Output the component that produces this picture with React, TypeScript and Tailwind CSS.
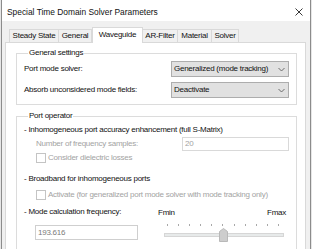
import React from "react";

const Chevron = () => (
  <svg width="7" height="5" viewBox="0 0 7 5" className="shrink-0">
    <polyline points="0.5,1 3.5,4 6.5,1" fill="none" stroke="#606060" strokeWidth="0.9" />
  </svg>
);

const Select = ({ value }: { value: string }) => (
  <div className="w-[118px] h-[16px] bg-[#e1e1e1] border border-[#adadad] flex items-center justify-between pl-[2px] pr-[3px]">
    <span className="leading-[10px]">{value}</span>
    <Chevron />
  </div>
);

const Checkbox = () => (
  <div className="w-[10px] h-[10px] border border-[#c4c4c4] bg-white shrink-0" />
);

const tabs = [
  { name: "Steady State", w: "w-[50px]" },
  { name: "General", w: "w-[34px]" },
  { name: "Waveguide", w: "w-[51px]", active: true },
  { name: "AR-Filter", w: "w-[36px]" },
  { name: "Material", w: "w-[35px]" },
  { name: "Solver", w: "w-[28px]" },
];

const ticks = [0, 1, 2, 3, 4, 5, 6, 7, 8, 9, 10];

export default function App() {
  return (
    <div className="w-[312px] h-[249px] overflow-hidden flex bg-[#e6e6e6] [font-family:'Liberation_Sans',Arial,sans-serif] text-[8px] tracking-[-0.25px] text-[#111]">
      <div className="ml-[1px] w-[310px] shrink-0 border-l border-r border-[#8c8c8c] bg-[#f0f0f0] flex flex-col">
        {/* Title bar */}
        <div className="h-[21px] bg-white flex items-center justify-between pl-[5px] pr-[7px] shrink-0">
          <span className="text-[8.4px] tracking-normal leading-[10px] mt-[3px]">Special Time Domain Solver Parameters</span>
          <svg width="8" height="8" viewBox="0 0 8 8" className="mt-[3px]">
            <line x1="0.5" y1="0.5" x2="7.5" y2="7.5" stroke="#222" strokeWidth="0.9" />
            <line x1="7.5" y1="0.5" x2="0.5" y2="7.5" stroke="#222" strokeWidth="0.9" />
          </svg>
        </div>

        {/* Tabs */}
        <div className="flex items-end h-[15px] mt-[6px] ml-[7px] shrink-0">
          {tabs.map((t) =>
            t.active ? (
              <div
                key={t.name}
                className={`${t.w} h-[16px] -mb-[1px] relative z-10 bg-white border border-b-0 border-[#d9d9d9] flex items-center justify-center leading-[10px] pb-[1px]`}
              >
                {t.name}
              </div>
            ) : (
              <div
                key={t.name}
                className={`${t.w} h-[13px] bg-[#f0f0f0] border border-b-0 border-[#d9d9d9] flex items-center justify-center leading-[10px] -ml-[1px] first:ml-0`}
              >
                {t.name}
              </div>
            )
          )}
        </div>

        {/* Panel */}
        <div className="ml-[3px] mr-[4px] flex-1 bg-white border border-[#d9d9d9] pl-[10px] flex flex-col">
          {/* General settings */}
          <fieldset className="w-[281px] mt-[5px] border border-[#dcdcdc] px-[7px] pb-[6px]">
            <legend className="ml-[4px] px-[1px] leading-[10px]">General settings</legend>
            <div className="flex flex-col gap-[5px] pt-[3px]">
              <div className="flex items-center justify-between h-[16px]">
                <span className="leading-[10px]">Port mode solver:</span>
                <Select value="Generalized (mode tracking)" />
              </div>
              <div className="flex items-center justify-between h-[16px]">
                <span className="leading-[10px]">Absorb unconsidered mode fields:</span>
                <Select value="Deactivate" />
              </div>
            </div>
          </fieldset>

          {/* Port operator */}
          <fieldset className="w-[281px] mt-[6px] border border-[#dcdcdc] px-[7px] pb-[7px]">
            <legend className="ml-[4px] px-[1px] leading-[10px]">Port operator</legend>
            <div className="flex flex-col pt-[4px]">
              <div className="h-[10px] leading-[10px]">- Inhomogeneous port accuracy enhancement (full S-Matrix)</div>
              <div className="h-[14px] mt-[2px] flex items-center justify-between pl-[12px]">
                <span className="leading-[10px] text-[#a3a3a3]">Number of frequency samples:</span>
                <div className="w-[107px] h-[14px] border border-[#d9d9d9] bg-white flex items-center pl-[2px] leading-[10px] text-[#a3a3a3]">
                  20
                </div>
              </div>
              <div className="h-[10px] mt-[2px] flex items-center gap-[2px] pl-[12px]">
                <Checkbox />
                <span className="leading-[10px] text-[#a3a3a3]">Consider dielectric losses</span>
              </div>
              <div className="h-[10px] mt-[11px] leading-[10px]">- Broadband for inhomogeneous ports</div>
              <div className="h-[10px] mt-[6px] flex items-center gap-[2px] pl-[12px]">
                <Checkbox />
                <span className="leading-[10px] text-[#a3a3a3]">
                  Activate (for generalized port mode solver with mode tracking only)
                </span>
              </div>
              <div className="flex justify-between mt-[7px]">
                <div className="flex flex-col">
                  <div className="h-[10px] leading-[10px]">- Mode calculation frequency:</div>
                  <div className="ml-[11px] mt-[8px] w-[103px] h-[15px] border border-[#cfcfcf] bg-white flex items-center pl-[2px] leading-[10px] text-[#7a7a7a]">
                    193.616
                  </div>
                </div>
                <div className="w-[131px] flex flex-col">
                  <div className="h-[10px] mt-[1px] flex justify-between leading-[10px] pr-[3px]">
                    <span>Fmin</span>
                    <span>Fmax</span>
                  </div>
                  <div className="relative h-[18px] mt-[6px]">
                    <div className="flex justify-between ml-[9px] mr-[10px] h-[2px]">
                      {ticks.map((i) => (
                        <div key={i} className="w-[1px] h-[2px] bg-[#a8a8a8]" />
                      ))}
                    </div>
                    <div className="ml-[6px] mr-[5px] mt-[7px] h-[4px] bg-[#e7eaea] border border-[#d6d6d6]" />
                    <svg width="9" height="14" viewBox="0 0 9 14" className="absolute left-[61px] top-[4px]">
                      <polygon points="4.5,0.5 8.5,3.5 8.5,13.5 0.5,13.5 0.5,3.5" fill="#cdcdcd" stroke="#b9b9b9" strokeWidth="1" />
                    </svg>
                  </div>
                </div>
              </div>
            </div>
          </fieldset>
        </div>
      </div>
    </div>
  );
}
